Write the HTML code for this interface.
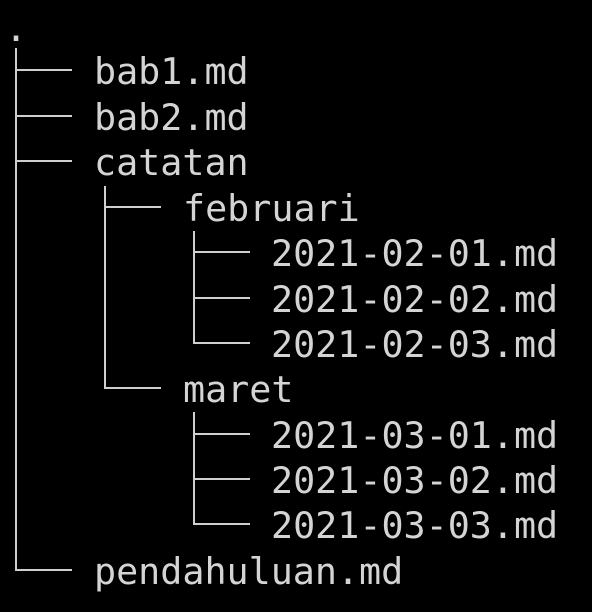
<!DOCTYPE html><html><head><style>
body{margin:0;width:592px;height:612px;background:#000;position:relative;overflow:hidden;font-family:"DejaVu Sans Mono","Liberation Mono",monospace;}
.t{position:absolute;color:#d4d4d4;font-size:36.7px;line-height:46px;white-space:pre;}
.v{position:absolute;width:2px;background:#cfcfcf;}
.h{position:absolute;height:2px;background:#cfcfcf;}
</style></head><body>
<div class="t" style="left:5px;top:6px">.</div>
<div class="v" style="left:15px;top:48px;height:522px"></div>
<div class="v" style="left:104px;top:186px;height:203px"></div>
<div class="v" style="left:193px;top:231px;height:112px"></div>
<div class="v" style="left:193px;top:412px;height:113px"></div>
<div class="h" style="left:15px;top:69px;width:57px"></div>
<div class="h" style="left:15px;top:115px;width:57px"></div>
<div class="h" style="left:15px;top:160px;width:57px"></div>
<div class="h" style="left:15px;top:569px;width:57px"></div>
<div class="h" style="left:104px;top:206px;width:57px"></div>
<div class="h" style="left:104px;top:387px;width:57px"></div>
<div class="h" style="left:193px;top:251px;width:57px"></div>
<div class="h" style="left:193px;top:297px;width:57px"></div>
<div class="h" style="left:193px;top:342px;width:57px"></div>
<div class="h" style="left:193px;top:433px;width:57px"></div>
<div class="h" style="left:193px;top:478px;width:57px"></div>
<div class="h" style="left:193px;top:523px;width:57px"></div>
<div class="t" style="left:94px;top:49px">bab1.md</div>
<div class="t" style="left:94px;top:95px">bab2.md</div>
<div class="t" style="left:94px;top:140px">catatan</div>
<div class="t" style="left:183px;top:186px">februari</div>
<div class="t" style="left:271px;top:231px">2021-02-01.md</div>
<div class="t" style="left:271px;top:277px">2021-02-02.md</div>
<div class="t" style="left:271px;top:322px">2021-02-03.md</div>
<div class="t" style="left:183px;top:367px">maret</div>
<div class="t" style="left:271px;top:413px">2021-03-01.md</div>
<div class="t" style="left:271px;top:458px">2021-03-02.md</div>
<div class="t" style="left:271px;top:503px">2021-03-03.md</div>
<div class="t" style="left:94px;top:549px">pendahuluan.md</div>
</body></html>
